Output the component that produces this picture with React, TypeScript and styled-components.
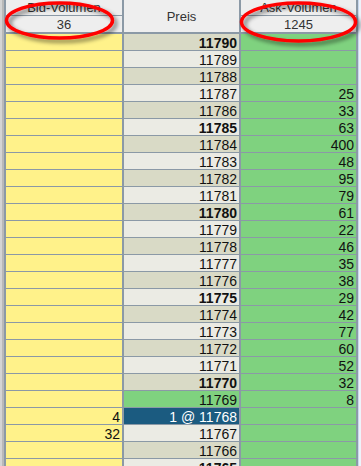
import React from "react";
import styled, { createGlobalStyle, css } from "styled-components";

const GlobalStyle = createGlobalStyle`
  html, body { margin: 0; padding: 0; background: #ececec; overflow: hidden; }
  body { font-family: "Liberation Sans", Arial, sans-serif; }
`;

const LINE = "#8b99a6";

const Frame = styled.div`
  position: relative;
  width: 361px;
  height: 466px;
  overflow: hidden;
  display: flex;
  background: #ececec;
`;

const LeftEdge = styled.div`
  width: 4px;
  flex: none;
  background: linear-gradient(to right, #d4d4d4 0 2px, #b9b9b9 2px 4px);
`;

const RightEdge = styled.div`
  width: 3px;
  flex: none;
  background: linear-gradient(to right, #c9d9ee 0 1px, #eef3fa 1px 3px);
`;

const Table = styled.div`
  flex: none;
  display: grid;
  grid-template-columns: 116px 115px 115px;
  grid-auto-rows: 16px;
  column-gap: 2px;
  row-gap: 1px;
  padding: 0 2px;
  background: ${LINE};
  align-content: start;
`;

const HeaderCell = styled.div`
  grid-row: span 2;
  height: 32px;
  background: #eeeeee;
  display: flex;
  flex-direction: column;
  font-size: 13px;
  color: #333;
`;

const HeaderPart = styled.div<{ $h: number; $line?: boolean }>`
  height: ${(p) => p.$h}px;
  display: flex;
  align-items: center;
  justify-content: center;
  line-height: 1;
  ${(p) =>
    p.$line &&
    css`
      border-bottom: 1px solid ${LINE};
      align-items: flex-start;
      padding-top: 1px;
      box-sizing: border-box;
    `}
`;

type Kind = "bid" | "ask" | "dark" | "light" | "best" | "sel";

const bg: Record<Kind, string> = {
  bid: "#fff28a",
  ask: "#7fd27f",
  dark: "#d9dac6",
  light: "#ebebe4",
  best: "#7fd27f",
  sel: "#1b5b80",
};

const Cell = styled.div<{ $kind: Kind; $bold?: boolean }>`
  height: 16px;
  background: ${(p) => bg[p.$kind]};
  color: ${(p) => (p.$kind === "sel" ? "#ffffff" : "#111111")};
  font-size: 14px;
  font-weight: ${(p) => (p.$bold ? 700 : 400)};
  line-height: 18px;
  text-align: right;
  padding-right: 2px;
  overflow: hidden;
  white-space: nowrap;
`;

const Overlay = styled.svg`
  position: absolute;
  left: 0;
  top: 0;
  pointer-events: none;
`;

const askVol: Record<number, number> = {
  11787: 25, 11786: 33, 11785: 63, 11784: 400, 11783: 48, 11782: 95,
  11781: 79, 11780: 61, 11779: 22, 11778: 46, 11777: 35, 11776: 38,
  11775: 29, 11774: 42, 11773: 77, 11772: 60, 11771: 52, 11770: 32,
  11769: 8,
};
const bidVol: Record<number, number> = { 11768: 4, 11767: 32 };

const prices = Array.from({ length: 26 }, (_, i) => 11790 - i);

export default function App() {
  return (
    <>
      <GlobalStyle />
      <Frame>
        <LeftEdge />
        <Table>
          <HeaderCell>
            <HeaderPart $h={16} $line>Bid-Volumen</HeaderPart>
            <HeaderPart $h={16}>36</HeaderPart>
          </HeaderCell>
          <HeaderCell>
            <HeaderPart $h={32}>Preis</HeaderPart>
          </HeaderCell>
          <HeaderCell>
            <HeaderPart $h={16} $line>Ask-Volumen</HeaderPart>
            <HeaderPart $h={16}>1245</HeaderPart>
          </HeaderCell>
          {prices.map((p) => {
            const bold = p % 5 === 0;
            let pk: Kind = p % 2 === 0 ? "dark" : "light";
            let label = String(p);
            if (p === 11769) pk = "best";
            if (p === 11768) {
              pk = "sel";
              label = "1 @ 11768";
            }
            return (
              <React.Fragment key={p}>
                <Cell $kind="bid">{bidVol[p] ?? ""}</Cell>
                <Cell $kind={pk} $bold={bold}>{label}</Cell>
                <Cell $kind="ask">{askVol[p] ?? ""}</Cell>
              </React.Fragment>
            );
          })}
        </Table>
        <RightEdge />
        <Overlay width={361} height={60} viewBox="0 0 361 60">
          <defs>
            <filter id="sh" x="-20%" y="-30%" width="140%" height="170%">
              <feGaussianBlur in="SourceAlpha" stdDeviation="2" />
              <feOffset dx="3" dy="3" result="b" />
              <feComponentTransfer>
                <feFuncA type="linear" slope="0.5" />
              </feComponentTransfer>
              <feMerge>
                <feMergeNode />
                <feMergeNode in="SourceGraphic" />
              </feMerge>
            </filter>
          </defs>
          <ellipse cx={59.5} cy={20.5} rx={53} ry={17.5} fill="none" stroke="#ff0000" strokeWidth={3.5} filter="url(#sh)" />
          <ellipse cx={298.5} cy={22} rx={57} ry={19} fill="none" stroke="#ff0000" strokeWidth={3.5} filter="url(#sh)" />
        </Overlay>
      </Frame>
    </>
  );
}
